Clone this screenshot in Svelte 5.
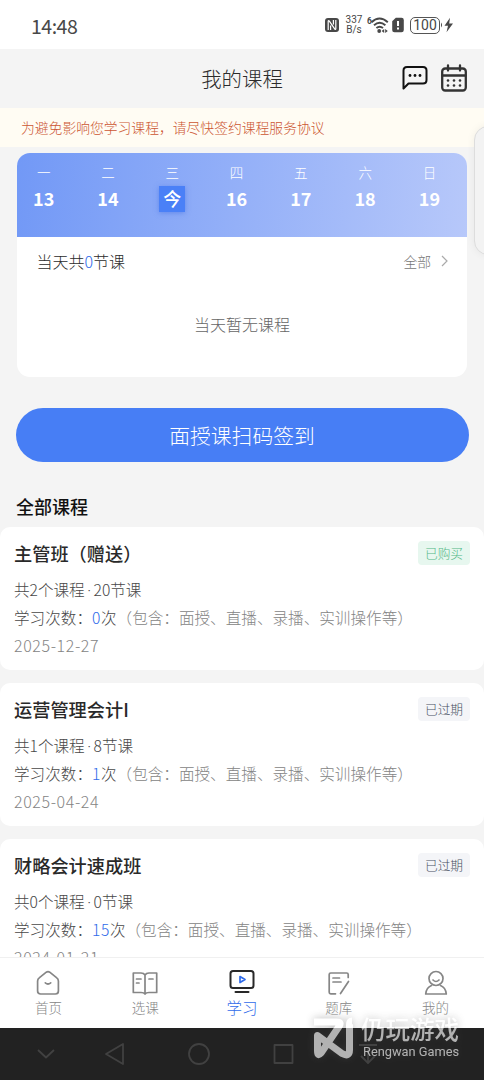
<script lang="ts">
	interface Course {
		title: string;
		courses: number;
		lessons: number;
		times: number;
		date: string;
		status: string;
		bought?: boolean;
	}

	const week = [
		{ name: '一', day: '13' },
		{ name: '二', day: '14' },
		{ name: '三', day: '今', today: true },
		{ name: '四', day: '16' },
		{ name: '五', day: '17' },
		{ name: '六', day: '18' },
		{ name: '日', day: '19' }
	];

	const courses: Course[] = [
		{ title: '主管班（赠送）', courses: 2, lessons: 20, times: 0, date: '2025-12-27', status: '已购买', bought: true },
		{ title: '运营管理会计I', courses: 1, lessons: 8, times: 1, date: '2025-04-24', status: '已过期' },
		{ title: '财略会计速成班', courses: 0, lessons: 0, times: 15, date: '2024-01-21', status: '已过期' }
	];

	const tabs = [
		{ id: 'home', label: '首页' },
		{ id: 'pick', label: '选课' },
		{ id: 'study', label: '学习' },
		{ id: 'bank', label: '题库' },
		{ id: 'me', label: '我的' }
	];

	let active = $state('study');
</script>

<div class="phone">
	<div class="status-bar">
		<span class="clock">14:48</span>
		<div class="indicators">
			<svg width="14" height="16" viewBox="0 0 14 16">
				<rect x="0" y="1" width="14" height="14" rx="3" fill="#484848" />
				<path d="M3.2 13V4.2Q3.2 3 4.2 4L9.8 12Q10.8 13 10.8 11.8V3M5.6 13V8.6M8.4 3V7.4" fill="none" stroke="#fff" stroke-width="1.2" />
			</svg>
			<span class="speed">337<br />B/s</span>
			<svg class="wifi" width="22" height="18" viewBox="0 0 22 18">
				<text x="0" y="8" font-size="8.5" font-weight="700" fill="#484848">6</text>
				<g fill="none" stroke="#484848" stroke-width="1.9">
					<path d="M4.5 6.2Q12.5-1 20.8 6.2" />
					<path d="M7 9.2Q12.6 4.3 18.4 9.2" />
					<path d="M9.4 12Q12.6 9.3 16 12" />
				</g>
				<circle cx="12.2" cy="15" r="1.9" fill="#484848" />
				<path d="M14.6 15l2.6-2v4zM20.8 15l-2.6-2v4z" fill="#484848" />
			</svg>
			<svg class="sim" width="12" height="16" viewBox="0 0 12 16">
				<path d="M3.8.7H9.5Q11.8.7 11.8 3V13Q11.8 15.3 9.5 15.3H2.5Q.2 15.3.2 13V4.3Z" fill="#484848" />
				<path d="M6 4V9M6 10.6V12.6" stroke="#fff" stroke-width="2" />
			</svg>
			<span class="battery">100</span>
			<svg width="12" height="16" viewBox="0 0 12 16">
				<path d="M0 5.5Q2 8 0 10.5Z" fill="#484848" />
				<path d="M9 .8L3.5 8.8H7L5.5 15.3L12 6.6H8.2Z" fill="#484848" />
			</svg>
		</div>
	</div>

	<header>
		<h1>我的课程</h1>
		<div class="actions">
			<svg width="26" height="26" viewBox="0 0 26 26">
				<path d="M1.5 23.5V5.5Q1.5 2 5 2H21Q24.5 2 24.5 5.5V15Q24.5 18.5 21 18.5H6.5Z" fill="none" stroke="#111" stroke-width="2" stroke-linejoin="round" />
				<g fill="#111"><circle cx="8" cy="10.5" r="1.4" /><circle cx="13" cy="10.5" r="1.4" /><circle cx="18" cy="10.5" r="1.4" /></g>
			</svg>
			<svg width="26" height="28" viewBox="0 0 26 28">
				<g fill="none" stroke="#333" stroke-width="2.3" stroke-linecap="round">
					<rect x="1.2" y="4.5" width="23.6" height="22" rx="3" />
					<path d="M1.5 11.5H24.5M7 1.5V6.5M19 1.5V6.5" />
				</g>
				<g fill="#333">
					{#each [7, 13, 19] as cx}
						<circle {cx} cy="16.5" r="1.3" />
						<circle {cx} cy="21.5" r="1.3" />
					{/each}
				</g>
			</svg>
		</div>
	</header>

	<div class="notice">为避免影响您学习课程，请尽快签约课程服务协议</div>

	<main>
		<section class="schedule">
			<div class="week">
				{#each week as item}
					<div class="weekday">
						<span class="name">{item.name}</span>
						<span class="day" class:today={item.today}>{item.day}</span>
					</div>
				{/each}
			</div>
			<div class="summary">
				<span>当天共<em>0</em>节课</span>
				<span class="all">
					全部
					<svg width="7" height="12" viewBox="0 0 7 12"><path d="M1 1L6 6L1 11" fill="none" stroke="#aaa" stroke-width="1.2" /></svg>
				</span>
			</div>
			<p class="empty">当天暂无课程</p>
		</section>

		<button type="button" class="sign">面授课扫码签到</button>

		<h2>全部课程</h2>
		{#each courses as course}
			<article>
				<div class="card-head">
					<h3>{course.title}</h3>
					<span class="badge" class:bought={course.bought}>{course.status}</span>
				</div>
				<p>共{course.courses}个课程<i>·</i>{course.lessons}节课</p>
				<p>学习次数：<em>{course.times}</em>次<span class="hint">（包含：面授、直播、录播、实训操作等）</span></p>
				<p class="date">{course.date}</p>
			</article>
		{/each}
	</main>

	<nav>
		{#each tabs as tab}
			<button type="button" class="tab" class:active={active === tab.id} onclick={() => (active = tab.id)}>
				<svg width="28" height="28" viewBox="0 0 28 28" fill="none" stroke="currentColor" stroke-width="1.7" stroke-linecap="round" stroke-linejoin="round">
					{#if tab.id === 'home'}
						<path d="M12.3 3.2Q14 2 15.7 3.2L22.5 8.6Q24.4 10 24.4 12V22Q24.4 25 21.4 25H6.6Q3.6 25 3.6 22V12Q3.6 10 5.5 8.6ZM11.3 13.8Q14 16.2 16.7 13.8" />
					{:else if tab.id === 'pick'}
						<path d="M14 6Q12.8 4 10 4H2.3V23.5H10Q13 23.5 14 25Q15 23.5 18 23.5H25.7V4H18Q15.2 4 14 6ZM14 6V24.5M5.5 10H10M5.5 14H8M18 10H22" />
					{:else if tab.id === 'study'}
						<rect x="2.5" y="2" width="23" height="17" rx="2.5" stroke="#282828" stroke-width="2" />
						<path d="M7.5 23H20.5" stroke="#282828" stroke-width="2" />
						<path d="M12 7.5L17 10.5L12 13.5Z" />
					{:else if tab.id === 'bank'}
						<path d="M23.2 8.5V5.5Q23.2 4 21.7 4H5.7Q4.2 4 4.2 5.5V23.3Q4.2 24.8 5.7 24.8H10.5M8 9H14.5M8 13H16M23.5 12.5L15.5 24.5" />
					{:else}
						<circle cx="14" cy="9.5" r="7" />
						<path d="M11 11Q14 14 17 11M9.5 16.5Q4.3 18.5 3.7 25H24.3Q23.7 18.5 18.5 16.5" />
					{/if}
				</svg>
				<span>{tab.label}</span>
			</button>
		{/each}
	</nav>

	<div class="system-nav">
		<svg width="484" height="52" viewBox="0 0 484 52" fill="none" stroke="#414141" stroke-width="1.8" stroke-linejoin="round">
			<path d="M38 22L46 29.5L54 22M123 16V36L106 26Z" />
			<circle cx="199" cy="26" r="10" />
			<rect x="274.5" y="17" width="18" height="18" />
			<path d="M359 17H377M368 21V34M361 28L368 35L375 28" />
		</svg>
	</div>

	<div class="handle"></div>

	<div class="watermark">
		<svg width="46" height="42" viewBox="0 0 46 42">
			<path d="M5 5H28Q33 5 30 9.5L12 36Q8.5 40 8.5 34V18.5L33 36.5Q40.5 40.5 40.5 33V8Q40.5 4 43 4" fill="none" stroke="#fff" stroke-width="7" stroke-linejoin="round" />
		</svg>
		<div class="mark-text">
			<strong>仍玩游戏</strong>
			<span>Rengwan Games</span>
		</div>
	</div>
</div>

<style>
	:global(body) {
		margin: 0;
	}
	.phone {
		position: relative;
		display: flex;
		flex-direction: column;
		width: 484px;
		height: 1080px;
		overflow: hidden;
		background: #f4f4f4;
		color: #2b2b2b;
		font-family: 'Noto Sans CJK SC', sans-serif;
		font-weight: 300;
	}
	h1,
	h2,
	h3,
	p {
		margin: 0;
	}
	em,
	i {
		font-style: normal;
	}
	em {
		color: #2f6bea;
	}
	button {
		border: none;
		padding: 0;
		font: inherit;
	}
	svg {
		display: block;
		flex: none;
	}
	.status-bar {
		display: flex;
		align-items: center;
		justify-content: space-between;
		flex: none;
		height: 49px;
		box-sizing: border-box;
		padding: 1px 31px 0 31px;
		background: #fff;
		color: #484848;
	}
	.clock {
		font-size: 19.5px;
		font-weight: 400;
		letter-spacing: -0.5px;
	}
	.indicators {
		display: flex;
		align-items: center;
		font-weight: 400;
	}
	.speed {
		margin-left: 6px;
		width: 18px;
		font: 10px/10px Roboto, sans-serif;
		text-align: center;
	}
	.wifi {
		margin-left: 4px;
		font-family: Roboto, sans-serif;
	}
	.sim {
		margin-left: 3px;
	}
	.battery {
		box-sizing: border-box;
		width: 30px;
		height: 17px;
		margin: 0 1px 0 6px;
		border: 1.5px solid #555;
		border-radius: 5px;
		font: 14px/15px Roboto, sans-serif;
		text-align: center;
	}
	header {
		display: grid;
		grid-template-columns: 1fr auto 1fr;
		align-items: center;
		flex: none;
		box-sizing: border-box;
		height: 59px;
		padding: 0 17px 2px;
	}
	h1 {
		grid-column: 2;
		font-size: 20.4px;
		font-weight: 300;
	}
	.actions {
		display: flex;
		align-items: center;
		justify-content: flex-end;
		gap: 13px;
	}
	.notice {
		flex: none;
		height: 39px;
		padding-left: 21px;
		background: #fffcf3;
		color: #cc5531;
		font-size: 13.8px;
		line-height: 38px;
	}
	main {
		flex: 1;
		min-height: 0;
		overflow: hidden;
	}
	.schedule {
		box-sizing: border-box;
		height: 224px;
		margin: 6px 17px 0;
		border-radius: 13px;
		overflow: hidden;
		background: #fff;
	}
	.week {
		display: grid;
		grid-template-columns: repeat(7, 64.3px);
		height: 84px;
		margin-left: -5.5px;
		background: linear-gradient(95deg, #7198f6, #b7c8fa);
		color: #fff;
	}
	.weekday {
		display: flex;
		flex-direction: column;
		align-items: center;
	}
	.name {
		margin-top: 9px;
		font-size: 13.5px;
		line-height: 20px;
	}
	.day {
		width: 26px;
		height: 26px;
		margin-top: 4px;
		font-size: 18px;
		font-weight: 700;
		line-height: 24px;
		text-align: center;
	}
	.today {
		background: #4a80f7;
		box-shadow: 0 1px 5px rgba(60, 105, 225, 0.5);
		font-weight: 500;
	}
	.summary {
		display: flex;
		align-items: center;
		justify-content: space-between;
		height: 48px;
		padding: 0 19px 0 19.5px;
		font-size: 16px;
	}
	.all {
		display: flex;
		align-items: center;
		gap: 10px;
		color: #777;
		font-size: 13.8px;
	}
	.empty {
		margin-top: 26px;
		color: #666;
		font-size: 16px;
		line-height: 26px;
		text-align: center;
	}
	.sign {
		display: block;
		width: 453px;
		height: 54px;
		margin: 31px 0 0 15.5px;
		border-radius: 27px;
		background: #477ef5;
		color: #fff;
		font-size: 20.8px;
	}
	h2 {
		margin: 30px 0 6px 16px;
		color: #111;
		font-size: 18px;
		font-weight: 500;
		line-height: 29px;
	}
	article {
		box-sizing: border-box;
		height: 143px;
		margin-bottom: 13.2px;
		padding: 14px 14px 0;
		border-radius: 10px;
		background: #fff;
	}
	.card-head {
		display: flex;
		align-items: center;
		justify-content: space-between;
		height: 24px;
		margin-bottom: 10px;
	}
	h3 {
		padding-bottom: 1px;
		color: #292929;
		font-size: 18.2px;
		font-weight: 500;
		line-height: 22px;
	}
	.badge {
		width: 52px;
		height: 24px;
		border-radius: 4px;
		background: #f4f5f8;
		color: #485063;
		font-size: 12.7px;
		line-height: 23px;
		text-align: center;
	}
	.badge.bought {
		background: #e7f7ef;
		color: #52b886;
	}
	article p {
		height: 28px;
		color: #484848;
		font-size: 15.6px;
		line-height: 28px;
		white-space: nowrap;
	}
	article em {
		letter-spacing: 0.6px;
	}
	article i {
		margin: 0 2.5px;
		font-family: Roboto, sans-serif;
		line-height: 1;
	}
	.hint,
	article .date {
		color: #848484;
	}
	article .date {
		font-size: 16px;
		letter-spacing: 0.6px;
	}
	nav {
		display: grid;
		grid-template-columns: repeat(5, 1fr);
		flex: none;
		box-sizing: border-box;
		height: 71px;
		border-top: 1px solid #f0f0f0;
		background: #fff;
	}
	.tab {
		display: flex;
		flex-direction: column;
		align-items: center;
		padding-top: 11px;
		background: transparent;
		color: #868686;
		font-size: 13.5px;
	}
	.tab span {
		line-height: 20px;
	}
	.tab.active {
		color: #2f6bea;
		font-size: 15.5px;
	}
	.system-nav {
		flex: none;
		height: 52px;
		background: #222;
	}
	.handle {
		position: absolute;
		top: 126px;
		right: -20px;
		box-sizing: border-box;
		width: 30px;
		height: 129px;
		border: 1px solid #ddd;
		border-radius: 14px;
		background: #f3f3f3;
		box-shadow: 0 0 8px rgba(0, 0, 0, 0.06);
	}
	.watermark {
		position: absolute;
		top: 1015px;
		left: 309px;
		display: flex;
		align-items: center;
		gap: 6px;
		opacity: 0.65;
		color: #fff;
		filter: drop-shadow(0 0 4px rgba(80, 80, 80, 0.6));
	}
	.mark-text {
		display: flex;
		flex-direction: column;
	}
	.mark-text strong {
		font-size: 24.5px;
		font-weight: 500;
		line-height: 28px;
	}
	.mark-text span {
		padding-left: 2px;
		font: 12.8px/18px Roboto, sans-serif;
	}
</style>
